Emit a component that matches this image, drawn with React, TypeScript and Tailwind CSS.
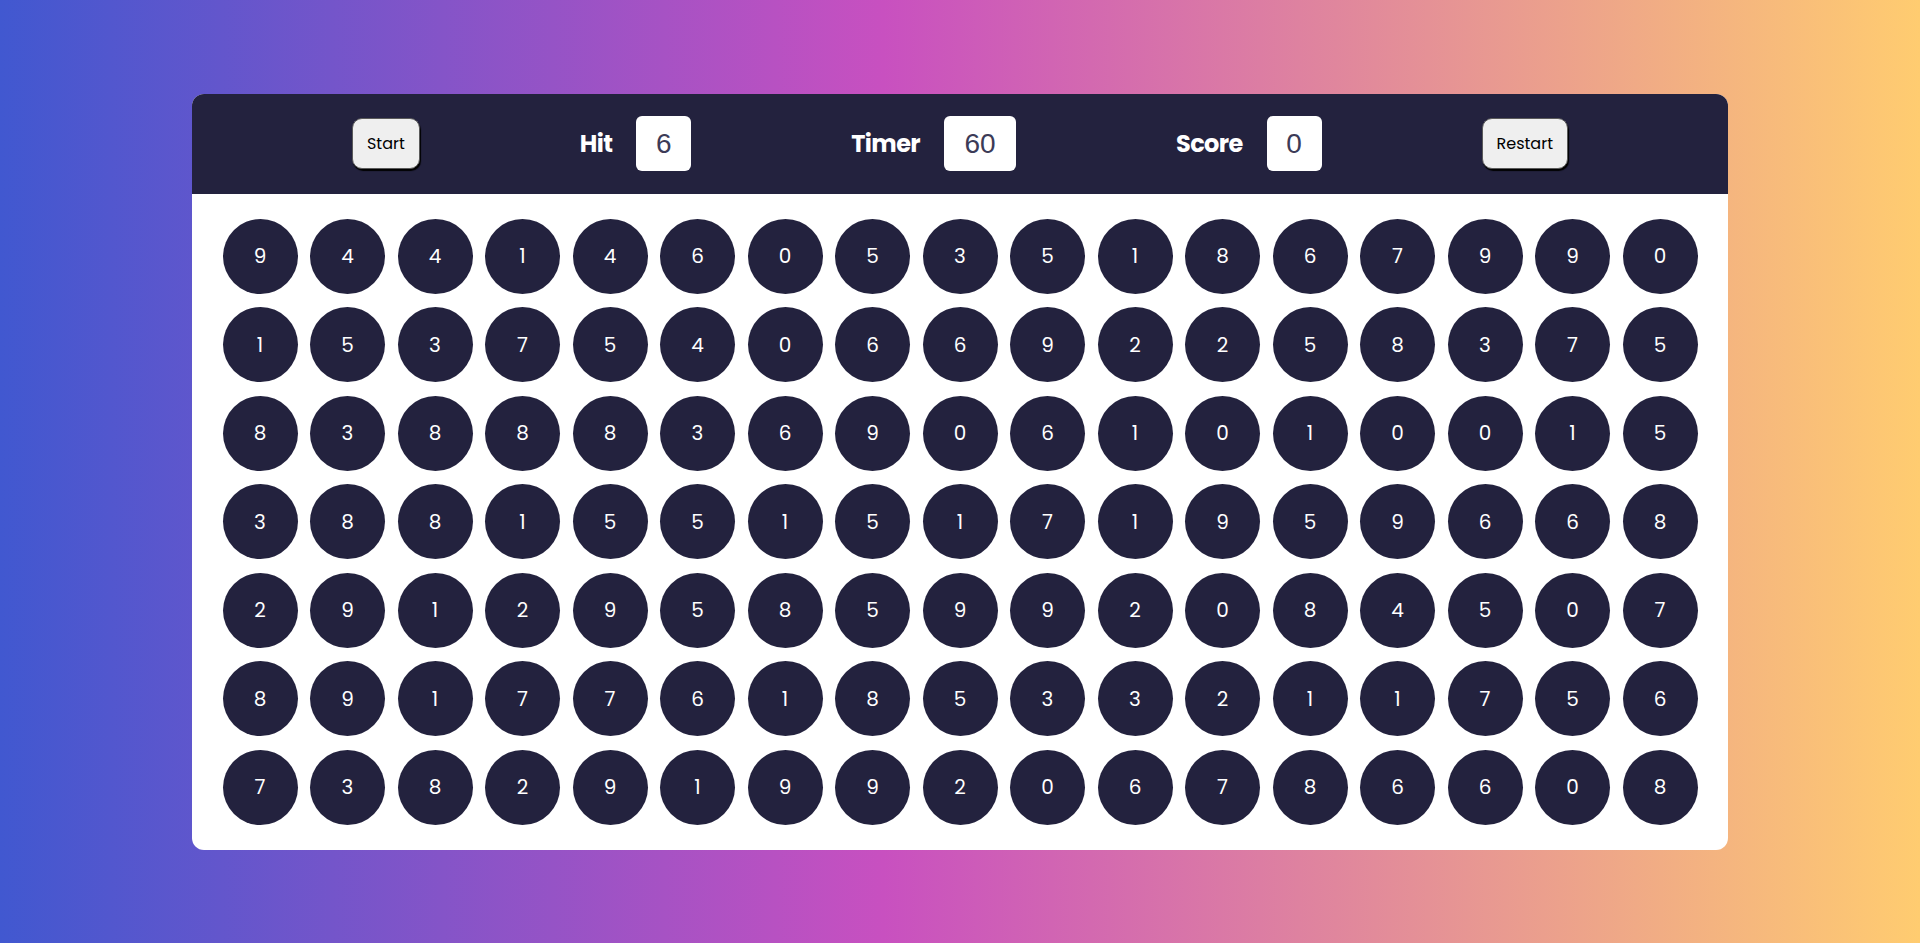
const board: number[][] = [
  [9, 4, 4, 1, 4, 6, 0, 5, 3, 5, 1, 8, 6, 7, 9, 9, 0],
  [1, 5, 3, 7, 5, 4, 0, 6, 6, 9, 2, 2, 5, 8, 3, 7, 5],
  [8, 3, 8, 8, 8, 3, 6, 9, 0, 6, 1, 0, 1, 0, 0, 1, 5],
  [3, 8, 8, 1, 5, 5, 1, 5, 1, 7, 1, 9, 5, 9, 6, 6, 8],
  [2, 9, 1, 2, 9, 5, 8, 5, 9, 9, 2, 0, 8, 4, 5, 0, 7],
  [8, 9, 1, 7, 7, 6, 1, 8, 5, 3, 3, 2, 1, 1, 7, 5, 6],
  [7, 3, 8, 2, 9, 1, 9, 9, 2, 0, 6, 7, 8, 6, 6, 0, 8],
];

const Stat = ({ label, value, wide }: { label: string; value: string; wide?: boolean }) => (
  <div className="flex items-center gap-6">
    <span className="text-2xl font-bold text-white tracking-tight">{label}</span>
    <div
      className={`flex h-[55px] items-center justify-center rounded-md bg-white font-['Liberation_Sans',Arial,sans-serif] text-[28px] text-[#3c3b57] ${
        wide ? "w-[72px]" : "w-[55px]"
      }`}
    >
      {value}
    </div>
  </div>
);

const GameButton = ({ children }: { children: string }) => (
  <button
    type="button"
    className="h-[51px] rounded-[10px] border border-[#5a5a5a] bg-[#efefef] px-[14px] text-[16px] text-black shadow-[1px_2px_1px_#000]"
  >
    {children}
  </button>
);

export default function App() {
  return (
    <div
      className="flex min-h-screen items-center justify-center bg-[linear-gradient(90deg,#4158d0_0%,#c850c0_46%,#ffcc70_100%)]"
      style={{ fontFamily: '"Poppins", Inter, "Noto Sans", sans-serif' }}
    >
      <div className="w-[80%] overflow-hidden rounded-xl bg-white">
        {/* barra superior */}
        <div className="flex h-[100px] items-center justify-evenly bg-[#23223e]">
          <GameButton>Start</GameButton>
          <Stat label="Hit" value="6" />
          <Stat label="Timer" value="60" wide />
          <Stat label="Score" value="0" />
          <GameButton>Restart</GameButton>
        </div>

        {/* tabuleiro */}
        <div className="grid grid-cols-[repeat(17,75px)] justify-center gap-x-[12.5px] gap-y-[13.5px] py-[25px]">
          {board.flat().map((n, i) => (
            <div
              key={i}
              className="flex h-[75px] w-[75px] items-center justify-center rounded-full bg-[#23223e] text-[20px] text-white"
            >
              {n}
            </div>
          ))}
        </div>
      </div>
    </div>
  );
}
